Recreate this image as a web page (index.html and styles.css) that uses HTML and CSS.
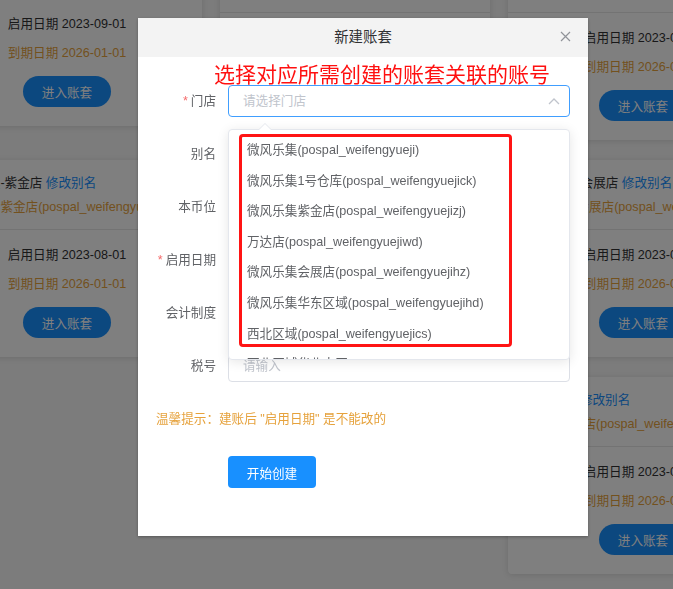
FILE: index.html
```html
<!DOCTYPE html>
<html lang="zh-CN">
<head>
<meta charset="utf-8">
<title>新建账套</title>
<link rel="stylesheet" href="styles.css">
</head>
<body>
<div class="page">
  <div class="grid">
    <div class="card">
      <div class="card-head">
        <div class="name">微风乐集 <span class="edit">修改别名</span></div>
        <div class="acct">微风乐集(pospal_weifengyueji)</div>
      </div>
      <div class="card-body">
        <div class="date">启用日期 2023-09-01</div>
        <div class="date due">到期日期 2026-01-01</div>
        <button class="enter">进入账套</button>
      </div>
    </div>
    <div class="card">
      <div class="card-head tall">
        <div class="name">微风乐集1号仓库 <span class="edit">修改别名</span></div>
        <div class="acct">微风乐集1号仓库(pospal_weifengyuejick)</div>
      </div>
      <div class="card-body">
        <div class="date">启用日期 2023-09-01</div>
        <div class="date due">到期日期 2026-01-01</div>
        <button class="enter">进入账套</button>
      </div>
    </div>
    <div class="card">
      <div class="card-head tall">
        <div class="name">万达店 <span class="edit">修改别名</span></div>
        <div class="acct">万达店(pospal_weifengyuejiwd)</div>
      </div>
      <div class="card-body">
        <div class="date">启用日期 2023-09-01</div>
        <div class="date due">到期日期 2026-01-01</div>
        <button class="enter">进入账套</button>
      </div>
    </div>
    <div class="card">
      <div class="card-head">
        <div class="name">微风乐集-紫金店 <span class="edit">修改别名</span></div>
        <div class="acct">微风乐集紫金店(pospal_weifengyuejizj)</div>
      </div>
      <div class="card-body">
        <div class="date">启用日期 2023-08-01</div>
        <div class="date due">到期日期 2026-01-01</div>
        <button class="enter">进入账套</button>
      </div>
    </div>
    <div class="card">
      <div class="card-head">
        <div class="name">微风乐集-华东区域 <span class="edit">修改别名</span></div>
        <div class="acct">微风乐集华东区域(pospal_weifengyuejihd)</div>
      </div>
      <div class="card-body">
        <div class="date">启用日期 2023-08-01</div>
        <div class="date due">到期日期 2026-01-01</div>
        <button class="enter">进入账套</button>
      </div>
    </div>
    <div class="card">
      <div class="card-head">
        <div class="name">微风乐集-会展店 <span class="edit">修改别名</span></div>
        <div class="acct">微风乐集会展店(pospal_weifengyuejihz)</div>
      </div>
      <div class="card-body">
        <div class="date">启用日期 2023-08-01</div>
        <div class="date due">到期日期 2026-01-01</div>
        <button class="enter">进入账套</button>
      </div>
    </div>
    <div class="card last">
      <div class="card-head">
        <div class="name">西北区域 <span class="edit">修改别名</span></div>
        <div class="acct">微风乐集1店(pospal_weifengyuejixb)</div>
      </div>
      <div class="card-body">
        <div class="date">启用日期 2023-08-01</div>
        <div class="date due">到期日期 2026-01-01</div>
        <button class="enter">进入账套</button>
      </div>
    </div>
  </div>
</div>

<div class="mask"></div>

<div class="dialog">
  <div class="dialog-head">
    <span class="dialog-title">新建账套</span>
    <span class="close">
      <svg width="11" height="11" viewBox="0 0 11 11"><path d="M1 1 L10 10 M10 1 L1 10" stroke="#909399" stroke-width="1.2" fill="none"/></svg>
    </span>
  </div>
  <div class="dialog-body">
    <div class="form-row top">
      <label class="label"><span class="req">*</span>门店</label>
      <div class="control">
        <div class="input focus">
          <span class="ph">请选择门店</span>
          <svg class="chev" width="12" height="8" viewBox="0 0 12 8"><path d="M1 7 L6 2 L11 7" stroke="#c0c4cc" stroke-width="1.3" fill="none"/></svg>
        </div>
        <div class="dropdown">
          <span class="arrow"></span>
          <div class="wrap">
            <ul class="options">
              <li>微风乐集(pospal_weifengyueji)</li>
              <li>微风乐集1号仓库(pospal_weifengyuejick)</li>
              <li>微风乐集紫金店(pospal_weifengyuejizj)</li>
              <li>万达店(pospal_weifengyuejiwd)</li>
              <li>微风乐集会展店(pospal_weifengyuejihz)</li>
              <li>微风乐集华东区域(pospal_weifengyuejihd)</li>
              <li>西北区域(pospal_weifengyuejics)</li>
              <li>西北区域华北大区(pospal_weifengyuejihb)</li>
            </ul>
          </div>
          <div class="mark"></div>
        </div>
      </div>
    </div>
    <div class="form-row">
      <label class="label">别名</label>
      <div class="control"><div class="input"><span class="ph">请输入</span></div></div>
    </div>
    <div class="form-row">
      <label class="label">本币位</label>
      <div class="control"><div class="input"><span class="ph">请选择</span></div></div>
    </div>
    <div class="form-row">
      <label class="label"><span class="req">*</span>启用日期</label>
      <div class="control"><div class="input"><span class="ph">选择日期</span></div></div>
    </div>
    <div class="form-row">
      <label class="label">会计制度</label>
      <div class="control"><div class="input"><span class="ph">请选择</span></div></div>
    </div>
    <div class="form-row">
      <label class="label">税号</label>
      <div class="control"><div class="input"><span class="ph">请输入</span></div></div>
    </div>
    <p class="tip">温馨提示：建账后 "启用日期" 是不能改的</p>
    <button class="primary">开始创建</button>
  </div>
  <div class="note">选择对应所需创建的账套关联的账号</div>
</div>
</body>
</html>
```

FILE: styles.css
```css
* { box-sizing: border-box; }

html, body {
  margin: 0;
  padding: 0;
}

body {
  font-family: "Liberation Sans", "Noto Sans CJK SC", sans-serif;
  font-size: 12.6px;
  color: #303133;
  background: #f8f8f8;
}

.page {
  width: 673px;
  height: 589px;
  overflow: hidden;
}

.grid {
  display: grid;
  grid-template-columns: repeat(3, 270px);
  column-gap: 18px;
  row-gap: 20px;
  align-items: start;
  margin: -71px 0 0 -68px;
}

.card {
  background: #fff;
  border-radius: 4px;
  box-shadow: 0 1px 6px rgba(0, 0, 0, 0.12);
}

.card.last { grid-column: 3; }

.card-head {
  padding: 11px 18px 10px;
  border-bottom: 1px solid #e6e6e6;
  white-space: nowrap;
  overflow: hidden;
}

.card-head.tall { padding-top: 25px; }

.name, .acct {
  height: 24px;
  line-height: 24px;
}

.name { color: #303133; }
.edit { color: #1890ff; }
.acct { color: #e6a23c; }

.card-body {
  padding: 14px 0 19px;
  display: flex;
  flex-direction: column;
  align-items: center;
}

.date {
  height: 22px;
  line-height: 22px;
  color: #303133;
}

.date.due {
  margin-top: 7px;
  color: #e6a23c;
}

.enter {
  margin-top: 12px;
  width: 88px;
  height: 31px;
  border: none;
  border-radius: 16px;
  background: #1890ff;
  color: #fff;
  font: inherit;
}

.mask {
  position: fixed;
  inset: 0;
  background: rgba(0, 0, 0, 0.5);
  z-index: 10;
}

.dialog {
  position: fixed;
  left: 138px;
  top: 18px;
  width: 450px;
  background: #fff;
  box-shadow: 0 1px 3px rgba(0, 0, 0, 0.3);
  z-index: 20;
}

.dialog-head {
  position: relative;
  height: 39px;
  background: #f3f3f3;
  display: flex;
  align-items: center;
  justify-content: center;
}

.dialog-title {
  font-size: 14.4px;
  color: #303133;
  line-height: 39px;
}

.close {
  position: absolute;
  right: 17px;
  top: 13px;
  width: 11px;
  height: 11px;
  display: flex;
}

.dialog-body {
  padding: 28px 18px 48px;
}

.form-row {
  display: flex;
  height: 32px;
  margin-bottom: 21px;
}

.form-row:nth-last-of-type(1) { margin-bottom: 0; }

.label {
  width: 72px;
  flex: none;
  padding-right: 12px;
  text-align: right;
  line-height: 32px;
  color: #606266;
}

.req {
  color: #f56c6c;
  margin-right: 3px;
}

.control {
  position: relative;
  flex: 1;
}

.form-row.top .control { z-index: 5; }

.input {
  height: 32px;
  border: 1px solid #dcdfe6;
  border-radius: 4px;
  padding: 0 14px;
  line-height: 30px;
  display: flex;
  align-items: center;
  justify-content: space-between;
  background: #fff;
}

.input.focus { border-color: #409eff; }

.ph { color: #c0c4cc; }

.chev { margin-right: -5px; }

.dropdown {
  position: absolute;
  left: 0;
  right: 0;
  top: calc(100% + 12px);
  height: 231px;
  background: #fff;
  border: 1px solid #e4e7ed;
  border-radius: 4px;
  box-shadow: 0 2px 12px rgba(0, 0, 0, 0.1);
}

.arrow {
  position: absolute;
  left: 30px;
  top: -7px;
  width: 0;
  height: 0;
  border-left: 6px solid transparent;
  border-right: 6px solid transparent;
  border-bottom: 6px solid #e4e7ed;
}

.arrow::after {
  content: "";
  position: absolute;
  left: -6px;
  top: 1px;
  border-left: 6px solid transparent;
  border-right: 6px solid transparent;
  border-bottom: 6px solid #fff;
}

.wrap {
  height: 229px;
  overflow: hidden;
}

.options {
  list-style: none;
  margin: 0;
  padding: 5px 0;
}

.options li {
  height: 30.6px;
  line-height: 30.6px;
  padding: 0 18px;
  color: #606266;
  white-space: nowrap;
}

.mark {
  position: absolute;
  left: 10px;
  top: 4px;
  width: 273px;
  height: 213px;
  border: 3px solid #ff1414;
  border-radius: 4px;
}

.tip {
  margin: 27px 0 0;
  line-height: 20px;
  color: #e6a23c;
}

.primary {
  margin: 27px 0 0 72px;
  width: 88px;
  height: 32px;
  border: none;
  border-radius: 4px;
  background: #1890ff;
  color: #fff;
  font: inherit;
}

.note {
  position: absolute;
  left: 76px;
  top: 45px;
  font-size: 21px;
  line-height: 24px;
  color: #ff1010;
  white-space: nowrap;
}
```
